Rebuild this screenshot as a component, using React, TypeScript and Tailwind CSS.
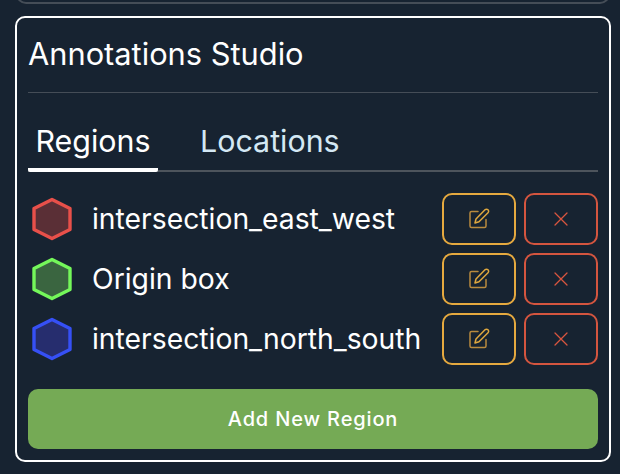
const regions = [
  { name: "intersection_east_west", stroke: "#e8504a", fill: "#5a2f36" },
  { name: "Origin box", stroke: "#74f75a", fill: "#3a6540" },
  { name: "intersection_north_south", stroke: "#3650f5", fill: "#262d6e" },
];

const Hexagon = ({ stroke, fill }: { stroke: string; fill: string }) => (
  <svg width="42" height="46" viewBox="0 0 42 46" className="shrink-0">
    <path
      d="M21 3.5 L39 12.5 V33.5 L21 42.5 L3 33.5 V12.5 Z"
      fill={fill}
      stroke={stroke}
      strokeWidth="3.4"
      strokeLinejoin="round"
    />
  </svg>
);

const EditIcon = () => (
  <svg width="22" height="22" viewBox="0 0 22 22" fill="none" stroke="#b98a3e" strokeWidth="1.5" strokeLinecap="round" strokeLinejoin="round">
    <path d="M10 3.5 H3.5 A1.5 1.5 0 0 0 2 5 V18 A1.5 1.5 0 0 0 3.5 19.5 H16.5 A1.5 1.5 0 0 0 18 18 V11.5" />
    <path d="M17 1.8 A2.1 2.1 0 0 1 20 4.8 L11 13.8 L7 15 L8 11 Z" stroke="#e0a83f" />
  </svg>
);

const CloseIcon = () => (
  <svg width="16" height="16" viewBox="0 0 16 16" fill="none" stroke="#d9553f" strokeWidth="1.3" strokeLinecap="round">
    <path d="M2 2 L14 14 M14 2 L2 14" />
  </svg>
);

const App = () => {
  return (
    <div className="h-[474px] w-[620px] overflow-hidden bg-[#172331] font-['Inter',sans-serif] [font-optical-sizing:none] text-white">
      {/* panel above, cut off by the top of the window */}
      <div className="mr-[10px] ml-[16px] -mt-[20px] h-[24px] rounded-[10px] border-2 border-[#454d57]" />

      <div className="mt-[12px] mr-[9px] ml-[15px] flex h-[446px] flex-col rounded-[10px] border-2 border-white pr-[11px] pl-[11px]">
        <h2 className="mt-[16px] text-[30.8px] leading-[40px] font-normal">Annotations Studio</h2>
        <div className="mt-[18px] h-px bg-[#454d57]" />

        <div className="mt-[19px] flex border-b-2 border-[#4d545c]">
          <div className="-mb-[2px] flex h-[60px] w-[130px] items-center justify-center rounded-[2px] border-b-[4px] border-white pt-[2px] text-[30.4px] leading-none">
            Regions
          </div>
          <div className="flex h-[58px] items-center pl-[42px] text-[30.4px] leading-none text-[#d4e8f4]">
            Locations
          </div>
        </div>

        <div className="mt-[21px] flex flex-col gap-[8px]">
          {regions.map((region) => (
            <div key={region.name} className="flex h-[52px] items-center">
              <div className="flex w-[64px] shrink-0 items-center pl-[3px]">
                <Hexagon stroke={region.stroke} fill={region.fill} />
              </div>
              <span className="flex-1 text-[28.3px] leading-none whitespace-nowrap">{region.name}</span>
              <div className="flex gap-[8px]">
                <button className="flex h-[52px] w-[74px] items-center justify-center rounded-[10px] border-2 border-[#e5a93f]">
                  <EditIcon />
                </button>
                <button className="flex h-[52px] w-[74px] items-center justify-center rounded-[10px] border-2 border-[#d4553f]">
                  <CloseIcon />
                </button>
              </div>
            </div>
          ))}
        </div>

        <button className="mt-[24px] h-[60px] rounded-[10px] bg-[#75aa55] text-[20px] font-medium tracking-[0.85px] text-white">
          Add New Region
        </button>
      </div>
    </div>
  );
};

export default App;
